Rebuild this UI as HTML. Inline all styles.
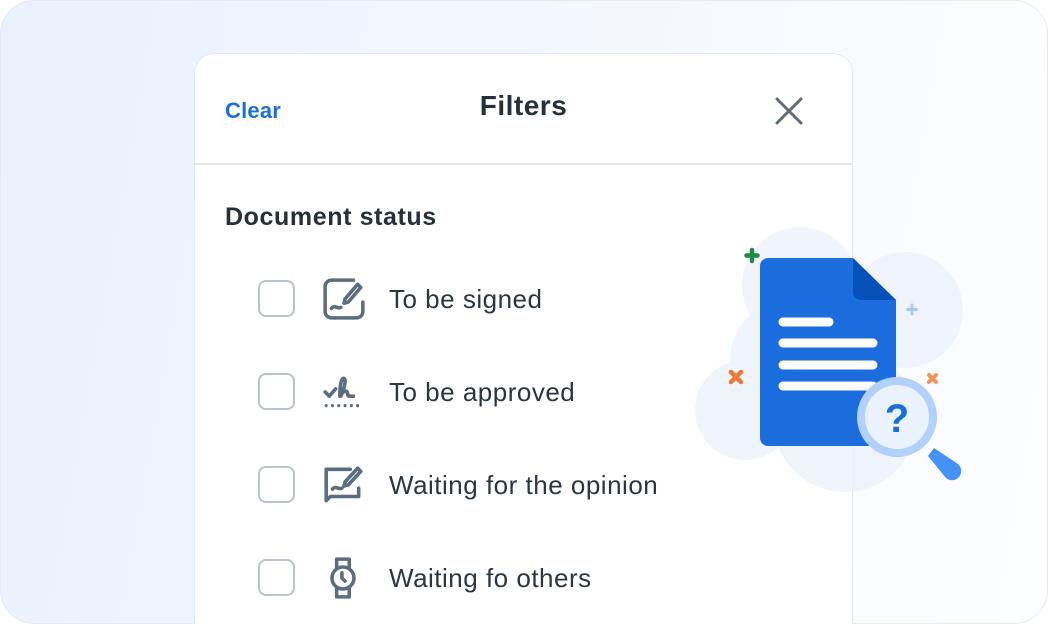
<!DOCTYPE html>
<html><head><style>
*{margin:0;padding:0;box-sizing:border-box}
html,body{width:1048px;height:624px;overflow:hidden}
body{background:#fff;font-family:"Liberation Sans",sans-serif;position:relative}
.outer{position:absolute;left:0;top:0;width:1048px;height:624px;border:1.5px solid #e3eaf5;border-radius:34px;background:linear-gradient(100deg,#e9f1fd 0%,#f3f7fe 50%,#fdfeff 100%);overflow:hidden}
.panel{position:absolute;left:194px;top:53px;width:659px;height:571px;background:#fff;border:1.5px solid #e1e8f2;border-bottom:none;border-radius:20px 20px 0 0}
.hdr{position:absolute;left:0;top:0;width:100%;height:111px;border-bottom:2px solid #e3e7ec}
.clear{position:absolute;left:30px;top:44px;font-size:22px;font-weight:bold;color:#1b6fe0;letter-spacing:0.2px}
.title{position:absolute;left:0;width:100%;text-align:center;top:36px;font-size:28px;font-weight:bold;color:#26303b;letter-spacing:0.5px;padding-left:0}
.sec{position:absolute;left:30px;top:149px;font-size:25px;font-weight:bold;color:#26303b;letter-spacing:0.6px}
.row{position:absolute;left:63px;height:40px}
.cb{position:absolute;left:0;top:0;width:37px;height:37px;border:2px solid #b8c3cf;border-radius:8px}
.lbl{position:absolute;left:131px;top:4px;font-size:26px;color:#2c3642;white-space:nowrap;letter-spacing:0.5px}
.ic{position:absolute;left:64px;top:-3px}
</style></head><body>
<div class="outer"></div>
<div class="panel">
 <div class="hdr">
  <div class="clear">Clear</div>
  <div class="title">Filters</div>
  <svg style="position:absolute;left:578px;top:41px" width="32" height="32" viewBox="0 0 32 32"><path d="M4 4L28 28M28 4L4 28" stroke="#5f6c78" stroke-width="3" stroke-linecap="round"/></svg>
 </div>
 <div class="sec">Document status</div>
 <div class="row" style="top:226px"><div class="cb"></div>
  <svg class="ic" width="44" height="44" viewBox="0 0 42 42" fill="none" stroke="#5b6d7e" stroke-width="3.4" stroke-linecap="round" stroke-linejoin="round"><path d="M30 3H9a6 6 0 0 0-6 6v24a6 6 0 0 0 6 6h24a6 6 0 0 0 6-6v-9"/><path d="M37 10l-12 14-4 1 1-4 12-14z"/><path d="M9 30c3-4 6 1 9-1"/></svg>
  <div class="lbl">To be signed</div></div>
 <div class="row" style="top:319px"><div class="cb"></div>
  <svg class="ic" width="44" height="44" viewBox="0 0 42 42" fill="none" stroke="#5b6d7e" stroke-width="3.4" stroke-linecap="round" stroke-linejoin="round"><path d="M3 21l4 4 6-7"/><path d="M18 25c2-4 6-16 3-17s-4 9-4 17c2-4 6-6 7-4s0 4 2 4 4 0 4 0"/><path d="M4 34h0M10 34h0M16 34h0M22 34h0M28 34h0M34 34h0" stroke-width="3"/></svg>
  <div class="lbl">To be approved</div></div>
 <div class="row" style="top:412px"><div class="cb"></div>
  <svg class="ic" width="44" height="44" viewBox="0 0 42 42" fill="none" stroke="#5b6d7e" stroke-width="3.4" stroke-linecap="round" stroke-linejoin="round"><path d="M27 6H4v30l4-4h27v-8"/><path d="M37 8l-12 13-4 1 1-4 12-13z"/><path d="M10 25c3-4 6 1 9-1"/></svg>
  <div class="lbl">Waiting for the opinion</div></div>
 <div class="row" style="top:505px"><div class="cb"></div>
  <svg class="ic" width="44" height="44" viewBox="0 0 42 42" fill="none" stroke="#5b6d7e" stroke-width="3.4" stroke-linecap="round" stroke-linejoin="round"><path d="M14 11V3h12v8M14 31v8h12v-8"/><circle cx="20" cy="21" r="10.5"/><path d="M19 16v5l3 3"/></svg>
  <div class="lbl">Waiting fo others</div></div>
</div>
<svg style="position:absolute;left:690px;top:220px" width="290" height="290" viewBox="0 0 290 290">
 <g fill="#edf3fc" opacity="0.8">
  <circle cx="110" cy="65" r="58"/><circle cx="215" cy="90" r="58"/><circle cx="55" cy="190" r="50"/><circle cx="155" cy="200" r="72"/><circle cx="100" cy="140" r="60"/>
 </g>
 <path d="M62 30v11M56.5 35.5h11" stroke="#1f8a43" stroke-width="4.5" stroke-linecap="round"/>
 <path d="M222 85v9M217.5 89.5h9" stroke="#a9c8f5" stroke-width="3" stroke-linecap="round"/>
 <path d="M41 152l10 10M51 152l-10 10" stroke="#ea7a39" stroke-width="4.5" stroke-linecap="round"/>
 <path d="M239 155l7 7M246 155l-7 7" stroke="#f0945a" stroke-width="4" stroke-linecap="round"/>
 <path d="M78 38h85l43 42v142a4 4 0 0 1-4 4H78a8 8 0 0 1-8-8V46a8 8 0 0 1 8-8z" fill="#1b6ddd"/>
 <path d="M163 38v34a8 8 0 0 0 8 8h35z" fill="#0452b7"/>
 <g stroke="#fff" stroke-width="9" stroke-linecap="round"><path d="M93 102h46M93 123h90M93 145h90M93 166h90"/></g>
 <path d="M238 236L244 228L268 244a9 9 0 0 1-12 14z" fill="#4591f5"/>
 <circle cx="207" cy="197" r="36" fill="#eaf2fd" stroke="#b1d0fb" stroke-width="8"/>
 <text x="207" y="212" text-anchor="middle" font-family="Liberation Sans" font-weight="bold" font-size="40" fill="#1b6ddd">?</text>
</svg>
</body></html>
